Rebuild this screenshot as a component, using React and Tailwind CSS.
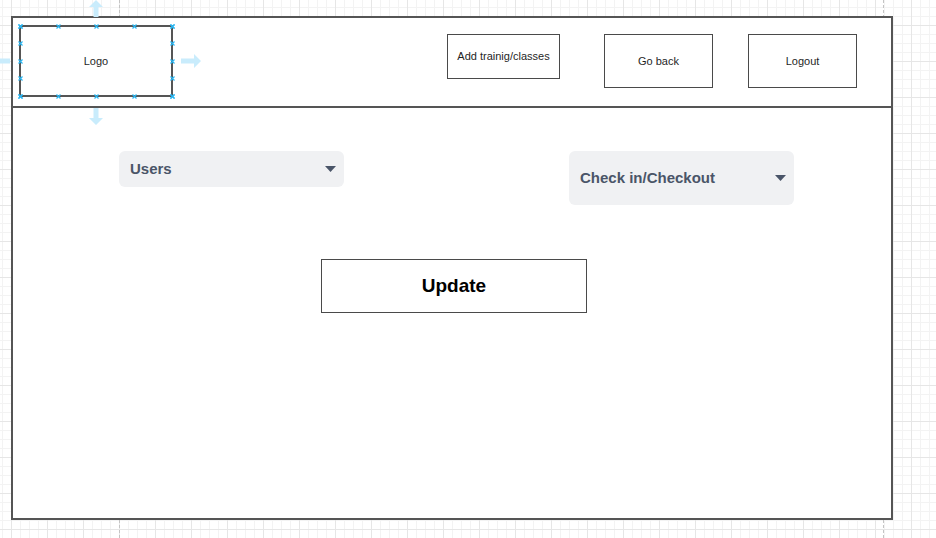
import React from 'react';

const Handle = () => (
  <svg className="w-[5px] h-[5px]" viewBox="0 0 5 5">
    <path d="M0.5 0.5L4.5 4.5M4.5 0.5L0.5 4.5" stroke="#29b6f2" strokeWidth="1.2" />
  </svg>
);

const HandleRow = ({ className }) => (
  <div className={`absolute flex justify-between ${className}`}>
    {[0, 1, 2, 3, 4].map(i => <Handle key={i} />)}
  </div>
);

const Caret = () => (
  <svg className="w-[11px] h-[6px] shrink-0" viewBox="0 0 11 6">
    <path d="M0 0H11L5.5 6Z" fill="#4a5568" />
  </svg>
);

const Dropdown = ({ label, className }) => (
  <div className={`flex items-center justify-between rounded-md bg-[#f0f1f3] pl-[11px] pr-[8px] ${className}`}>
    <span className="text-[15px] font-bold text-[#4a5568]">{label}</span>
    <Caret />
  </div>
);

const Box = ({ children, className }) => (
  <div className={`flex items-center justify-center border-[1.5px] border-[#4a4a4a] bg-white text-[11px] text-[#1f1f1f] ${className}`}>
    {children}
  </div>
);

export default function App() {
  return (
    <div
      className="relative w-[936px] h-[538px] overflow-hidden bg-white bg-[linear-gradient(to_right,#e6e6e6_1px,transparent_1px),linear-gradient(to_bottom,#e6e6e6_1px,transparent_1px),linear-gradient(to_right,#f3f3f3_1px,transparent_1px),linear-gradient(to_bottom,#f3f3f3_1px,transparent_1px)] [background-size:36px_36px,36px_36px,9px_9px,9px_9px] [background-position:11px_25px,11px_25px,11px_25px,11px_25px]"
      style={{ fontFamily: '"Liberation Sans", Arial, sans-serif' }}
    >
      {/* page break lines */}
      <div className="absolute left-[119px] top-0 h-full border-l border-dashed border-[#c4c4c4]" />
      <div className="absolute left-[883px] top-0 h-full border-l border-dashed border-[#c4c4c4]" />

      {/* wireframe frame */}
      <div className="relative ml-[11px] mt-[16px] w-[882px] h-[504px] border-2 border-[#555] bg-white flex flex-col">
        {/* header */}
        <div className="h-[90px] shrink-0 border-b-2 border-[#555] flex items-start pl-[6px] pt-[7px]">
          <div className="relative w-[154px] h-[72px] border-2 border-[#555] flex items-center justify-center text-[11px] text-[#1f1f1f]">
            Logo
            <HandleRow className="-left-[3.5px] -right-[3.5px] -top-[3.5px]" />
            <HandleRow className="-left-[3.5px] -right-[3.5px] -bottom-[3.5px]" />
            <HandleRow className="-left-[3.5px] -top-[3.5px] -bottom-[3.5px] flex-col" />
            <HandleRow className="-right-[3.5px] -top-[3.5px] -bottom-[3.5px] flex-col" />
          </div>
          <div className="ml-[274px] mt-[9px] flex items-start">
            <Box className="w-[113px] h-[45px] pb-[1px]">Add trainig/classes</Box>
            <Box className="ml-[44px] w-[109px] h-[54px]">Go back</Box>
            <Box className="ml-[35px] w-[109px] h-[54px]">Logout</Box>
          </div>
        </div>

        {/* body */}
        <div className="flex flex-col items-start pt-[43px] pl-[106px]">
          <div className="flex items-start gap-[225px]">
            <Dropdown label="Users" className="w-[225px] h-[36px]" />
            <Dropdown label="Check in/Checkout" className="w-[225px] h-[54px]" />
          </div>
          <div className="ml-[202px] mt-[54px] w-[266px] h-[54px] border-[1.5px] border-[#4a4a4a] flex items-center justify-center text-[19px] font-bold text-black">
            Update
          </div>
        </div>
      </div>

      {/* drag arrows around selected logo */}
      <svg className="absolute left-[89px] top-0 w-[14px] h-[17px]" viewBox="0 0 14 17">
        <path d="M7 0L14 7H9.5V17H4.5V7H0Z" fill="#c9ecfc" />
      </svg>
      <svg className="absolute left-[89px] top-[108px] w-[14px] h-[17px]" viewBox="0 0 14 17">
        <path d="M7 17L14 10H9.5V0H4.5V10H0Z" fill="#c9ecfc" />
      </svg>
      <svg className="absolute left-[181px] top-[54px] w-[20px] h-[14px]" viewBox="0 0 20 14">
        <path d="M20 7L13 0V4.5H0V9.5H13V14Z" fill="#c9ecfc" />
      </svg>
      <svg className="absolute left-0 top-[58px] w-[10px] h-[6px]" viewBox="0 0 10 6">
        <rect x="0" y="0.5" width="10" height="5" fill="#c9ecfc" />
      </svg>
    </div>
  );
}
